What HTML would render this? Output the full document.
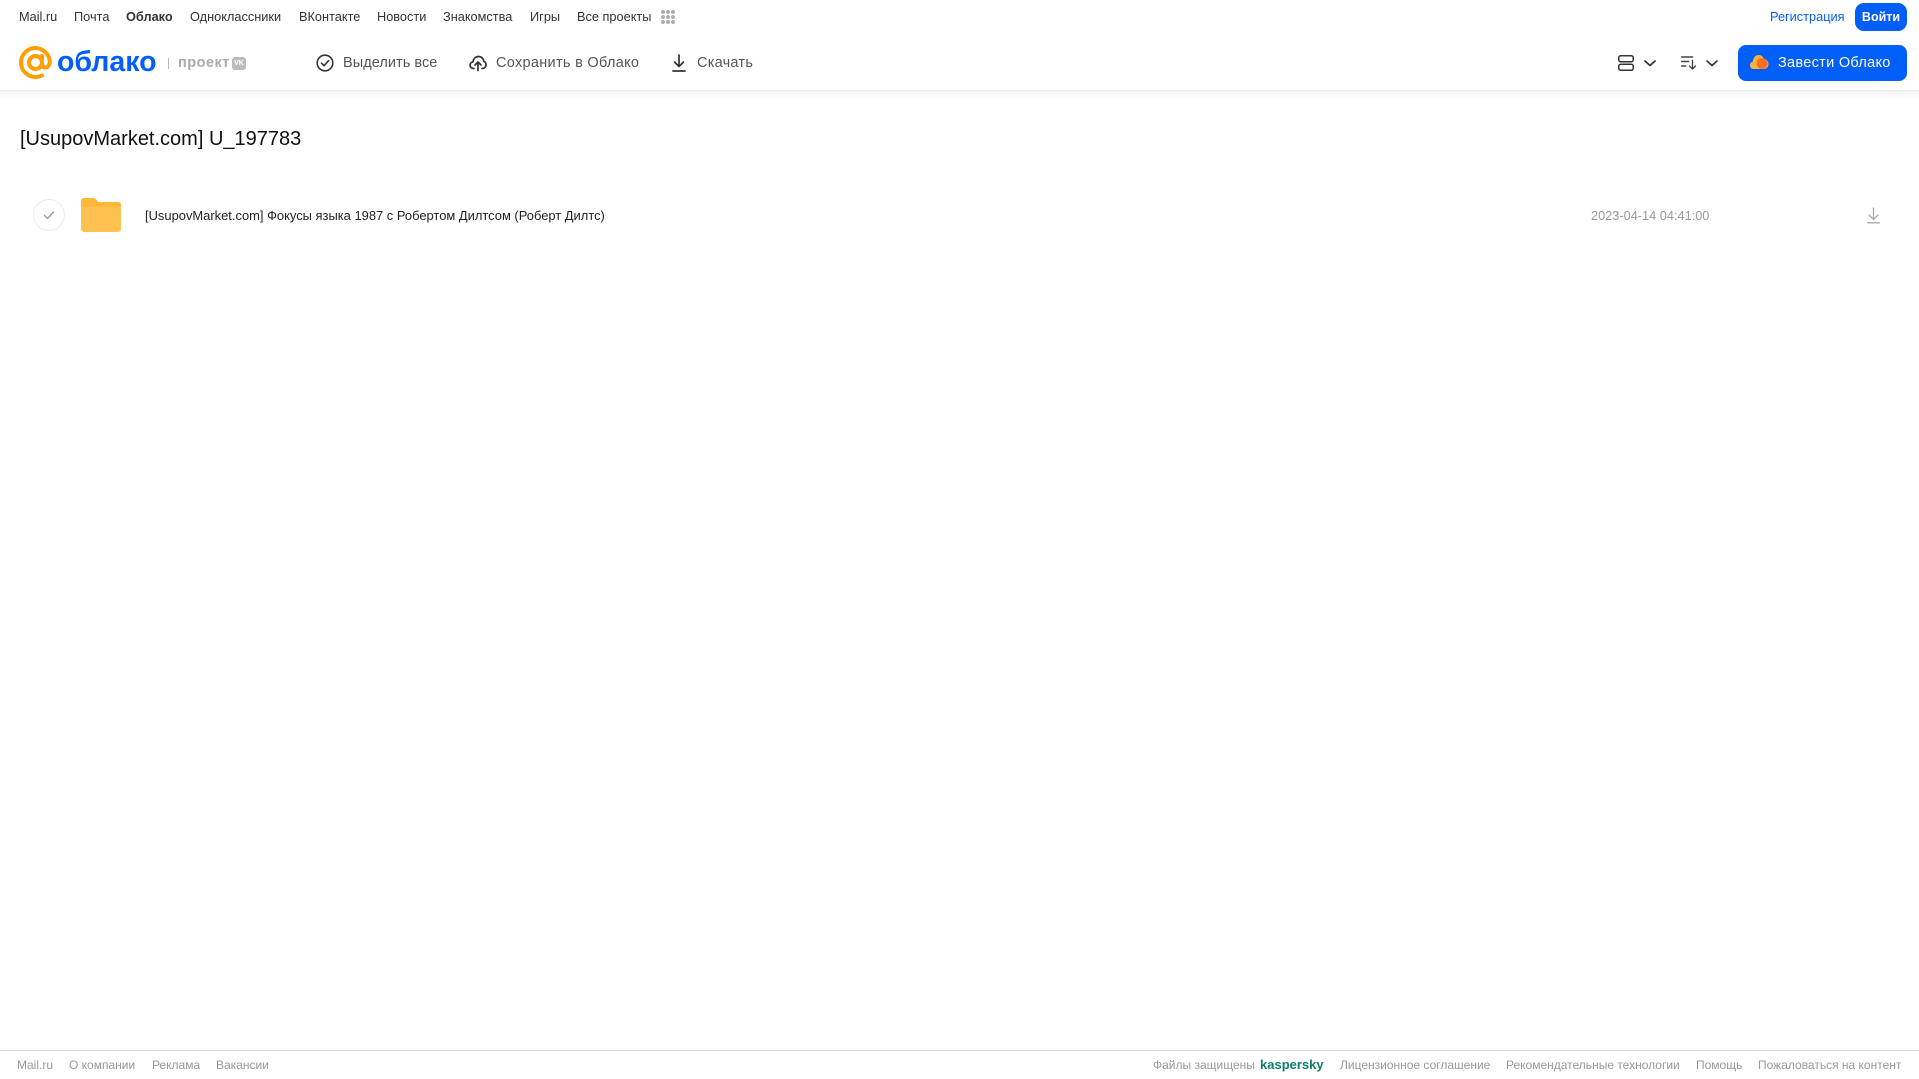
<!DOCTYPE html>
<html lang="ru"><head><meta charset="utf-8"><title>Облако</title>
<style>
html,body{margin:0;padding:0;background:#fff;width:1919px;height:1079px;overflow:hidden;font-family:"Liberation Sans",Arial,sans-serif}
.t{position:absolute;white-space:nowrap;line-height:16px}
.n{top:9px;font-size:12.75px;color:#333}
.a{top:55px;font-size:14.5px;color:#555}
.f{top:1057px;font-size:12px;color:#999}
svg{position:absolute;overflow:visible}
</style></head><body>
<div style="position:absolute;left:0;top:91px;width:1919px;height:8px;background:linear-gradient(#f3f3f3,#fff)"></div>
<div style="position:absolute;left:0;top:90px;width:1919px;height:1px;background:#efefef"></div>

<span class="t n" style="left:19px">Mail.ru</span>
<span class="t n" style="left:74px">Почта</span>
<span class="t n" style="left:126px;font-weight:bold">Облако</span>
<span class="t n" style="left:190px">Одноклассники</span>
<span class="t n" style="left:299px">ВКонтакте</span>
<span class="t n" style="left:377px">Новости</span>
<span class="t n" style="left:443px">Знакомства</span>
<span class="t n" style="left:530px">Игры</span>
<span class="t n" style="left:577px">Все проекты</span>
<svg style="left:661px;top:10px" width="14" height="14" fill="#adadad"><circle cx="2" cy="2" r="2"/><circle cx="7" cy="2" r="2"/><circle cx="12" cy="2" r="2"/><circle cx="2" cy="7" r="2"/><circle cx="7" cy="7" r="2"/><circle cx="12" cy="7" r="2"/><circle cx="2" cy="12" r="2"/><circle cx="7" cy="12" r="2"/><circle cx="12" cy="12" r="2"/></svg>

<svg style="left:19px;top:46px" width="33" height="33" viewBox="0 0 33 33" fill="none" stroke="#ff9e00" stroke-width="4"><circle cx="16.5" cy="16.5" r="6.5"/><path d="M23 10v8.500c0 4 5.500 4 7 .5 1-2.500.8-4.500.5-5.500C29 7 23 2 16.500 2 8.500 2 2 8.500 2 16.500S8.500 31 16.500 31c2.800 0 4.800-.6 6.500-1.500" stroke-linecap="round"/></svg>
<span class="t" style="left:57px;top:45px;line-height:34px;font-size:28.500px;font-weight:bold;color:#005ff9">облако</span>
<div style="position:absolute;left:168px;top:58px;width:1px;height:11px;background:#bbb"></div>
<span class="t" style="left:178px;top:55px;font-size:14.5px;font-weight:bold;color:#aaa;letter-spacing:.5px">проект</span>
<div style="position:absolute;left:232px;top:57px;width:14px;height:13px;border-radius:3px;background:#bcbcbc;color:#fff;font:bold 7px/13px 'Liberation Sans',sans-serif;text-align:center">VK</div>

<svg style="left:316px;top:54px" width="18" height="18" fill="none" stroke="#333" stroke-width="1.600"><circle cx="9" cy="9" r="7.800"/><path d="M5.500 9.200l2.500 2.500 4.600-5" stroke-linecap="round" stroke-linejoin="round"/></svg>
<span class="t a" style="left:343px;letter-spacing:.05px">Выделить все</span>
<svg style="left:469px;top:55px" width="18" height="16" fill="none" stroke="#333" stroke-width="1.700" stroke-linecap="round" stroke-linejoin="round"><path d="M5 13.500H4.500C2.500 13.500 1 12 1 10.200 1 8.500 2.300 7.200 3.800 7 4.300 3.800 6.600 1.500 9.500 1.500c2.800 0 5 2 5.300 4.800 1.300.5 2.200 1.900 2.200 3.500 0 2-1.500 3.700-3.500 3.700H13"/><path d="M9 15.500V7.500M6 10l3-3 3 3"/></svg>
<span class="t a" style="left:496px;letter-spacing:.3px">Сохранить в Облако</span>
<svg style="left:672px;top:54px" width="14" height="18" fill="none" stroke="#333" stroke-width="1.700" stroke-linecap="round" stroke-linejoin="round"><path d="M7 1v11M2.500 8L7 12.500 11.500 8M1 17h12"/></svg>
<span class="t a" style="left:697px;letter-spacing:.25px">Скачать</span>

<span class="t" style="left:1770px;top:9px;font-size:12.750px;color:#005ff9">Регистрация</span>
<div style="position:absolute;left:1855px;top:3px;width:52px;height:28px;background:#005ff9;border-radius:9px;color:#fff;font-size:12.500px;font-weight:bold;line-height:28px;text-align:center">Войти</div>

<svg style="left:1618px;top:55px" width="16" height="16" fill="none" stroke="#333" stroke-width="1.500"><rect x=".75" y=".75" width="14.500" height="6" rx="2"/><rect x=".75" y="9.250" width="14.500" height="6" rx="2"/></svg>
<svg style="left:1644px;top:60px" width="12" height="7" fill="none" stroke="#333" stroke-width="1.700" stroke-linecap="round" stroke-linejoin="round"><path d="M1 1l5 4.500L11 1"/></svg>
<svg style="left:1681px;top:56px" width="16" height="14" fill="none" stroke="#444" stroke-width="1.400" stroke-linecap="round" stroke-linejoin="round"><path d="M.7 1h11M.7 5.500h7M.7 10h4M11.500 4.500v8.500M8.500 10l3 3 3-3"/></svg>
<svg style="left:1706px;top:60px" width="12" height="7" fill="none" stroke="#333" stroke-width="1.700" stroke-linecap="round" stroke-linejoin="round"><path d="M1 1l5 4.500L11 1"/></svg>

<div style="position:absolute;left:1738px;top:45px;width:169px;height:36px;background:#005ff9;border-radius:8px"></div>
<svg style="left:1750px;top:54px" width="19" height="16"><path d="M4 15C1.500 15 0 13.300 0 11.200 0 9.300 1.200 8 2.800 7.600 3.200 3.500 5.600 1 8.500 1c2.600 0 4.600 1.600 5.300 4 2.800.2 4.700 2.400 4.700 5 0 2.800-2.100 5-4.800 5z" fill="#ffb13d"/><circle cx="12" cy="9.500" r="5.500" fill="#ff6a1f" opacity=".9"/></svg>
<span class="t" style="left:1778px;top:55px;font-size:14.500px;color:#fff;letter-spacing:.3px">Завести Облако</span>

<span class="t" style="left:20px;top:127px;font-size:20px;line-height:24px;color:#111">[UsupovMarket.com] U_197783</span>

<svg style="left:33px;top:199px" width="32" height="32" fill="none"><circle cx="16" cy="16" r="15.500" stroke="#ececec"/><path d="M11.500 16.500l3 3 6-6.500" stroke="#999" stroke-width="1.300" stroke-linecap="round" stroke-linejoin="round"/></svg>
<svg style="left:81px;top:198px" width="40" height="34"><path d="M0 3a3 3 0 0 1 3-3h9c2 0 3 1 4 2.500L17 4h20a3 3 0 0 1 3 3v24a3 3 0 0 1-3 3H3a3 3 0 0 1-3-3z" fill="#ffc14f"/><path d="M0 9h40v-2a3 3 0 0 0-3-3H17l-1-1.500C15 1 14 0 12 0H3a3 3 0 0 0-3 3z" fill="#ffb938"/></svg>
<span class="t" style="left:145px;top:208px;font-size:12.930px;color:#222">[UsupovMarket.com] Фокусы языка 1987 с Робертом Дилтсом (Роберт Дилтс)</span>
<span class="t" style="left:1591px;top:208px;font-size:12.750px;color:#999">2023-04-14 04:41:00</span>
<svg style="left:1867px;top:207px" width="13" height="17" fill="none" stroke="#aaa" stroke-width="1.300" stroke-linecap="round" stroke-linejoin="round"><path d="M6.500 1v11M2 8l4.500 4.500L11 8M.7 15.800h11.600"/></svg>

<div style="position:absolute;left:0;top:1050px;width:1919px;height:1px;background:#dcdcdc"></div>
<span class="t f" style="left:17px">Mail.ru</span>
<span class="t f" style="left:69px">О компании</span>
<span class="t f" style="left:152px">Реклама</span>
<span class="t f" style="left:216px">Вакансии</span>
<span class="t f" style="left:1153px">Файлы защищены</span>
<span class="t f" style="left:1260px;font-size:13px;font-weight:bold;color:#0b7f68">kaspersky</span>
<span class="t f" style="left:1340px">Лицензионное соглашение</span>
<span class="t f" style="left:1506px">Рекомендательные технологии</span>
<span class="t f" style="left:1696px">Помощь</span>
<span class="t f" style="left:1758px">Пожаловаться на контент</span>
</body></html>
